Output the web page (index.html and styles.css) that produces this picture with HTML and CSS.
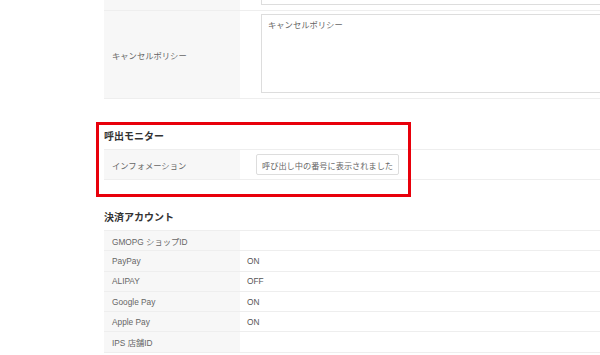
FILE: index.html
```html
<!DOCTYPE html>
<html lang="ja">
<head>
    <meta charset="UTF-8">
    <meta name="viewport" content="width=device-width, initial-scale=1.0">
    <title>店舗設定</title>
    <link rel="stylesheet" href="styles.css">
</head>
<body>
    <div class="wrap">
        <div class="table">
            <div class="row row-cut">
                <div class="label"></div>
                <div class="value"><textarea class="area area-cut"></textarea></div>
            </div>
            <div class="row row-tall">
                <div class="label">キャンセルポリシー</div>
                <div class="value"><textarea class="area">キャンセルポリシー</textarea></div>
            </div>
        </div>

        <h2 class="section-title first">呼出モニター</h2>
        <div class="table">
            <div class="row row-input">
                <div class="label">インフォメーション</div>
                <div class="value"><input class="text" type="text" value="呼び出し中の番号に表示されました!"></div>
            </div>
        </div>

        <h2 class="section-title second">決済アカウント</h2>
        <div class="table">
            <div class="row"><div class="label">GMOPG ショップID</div><div class="value"></div></div>
            <div class="row"><div class="label">PayPay</div><div class="value">ON</div></div>
            <div class="row"><div class="label">ALIPAY</div><div class="value">OFF</div></div>
            <div class="row"><div class="label">Google Pay</div><div class="value">ON</div></div>
            <div class="row"><div class="label">Apple Pay</div><div class="value">ON</div></div>
            <div class="row"><div class="label">IPS 店舗ID</div><div class="value"></div></div>
        </div>
    </div>

    <div class="highlight"></div>
</body>
</html>
```

FILE: styles.css
```css
body {
    margin: 0;
    overflow: hidden;
    background: #fff;
    font-family: "Liberation Sans", "Noto Sans CJK JP", sans-serif;
    color: #666;
    font-size: 8.3px;
}
.wrap {
    margin-left: 104px;
    width: 600px;
}
.table {
    border-top: 1px solid #eee;
}
.table:first-child {
    border-top: none;
}
.row {
    display: grid;
    grid-template-columns: 136px 1fr;
    border-bottom: 1px solid #eee;
    height: 19.3px;
}
.label {
    background: #f7f7f7;
    padding: 0 8px;
    display: flex;
    align-items: center;
}
.value {
    padding: 0 7px;
    display: flex;
    align-items: center;
    color: #555;
}
.row-cut {
    height: 10px;
    overflow: hidden;
}
.row-cut .value,
.row-tall .value {
    padding-left: 21px;
    align-items: flex-start;
}
.area {
    box-sizing: border-box;
    width: 100%;
    height: 79px;
    margin-top: 3px;
    border: 1px solid #ddd;
    padding: 3px 6px;
    font-family: inherit;
    font-size: 8.3px;
    color: #666;
    resize: none;
}
.area-cut {
    margin-top: -74px;
}
.row-tall {
    height: 87px;
}
.row-input {
    height: 29px;
}
.row-input .value {
    padding-left: 16px;
}
.text {
    box-sizing: border-box;
    width: 143px;
    height: 21px;
    border: 1px solid #ddd;
    border-radius: 2px;
    padding: 0 5px;
    font-family: inherit;
    font-size: 8.2px;
    color: #666;
}
.section-title {
    margin: 0;
    font-size: 10px;
    font-weight: bold;
    color: #333;
    padding: 8px 0 6px;
}
.section-title.first {
    margin-top: 21px;
}
.section-title.second {
    margin-top: 21px;
}
.highlight {
    position: absolute;
    left: 96px;
    top: 122px;
    width: 309px;
    height: 69px;
    border: 3px solid #e8000b;
}
```
